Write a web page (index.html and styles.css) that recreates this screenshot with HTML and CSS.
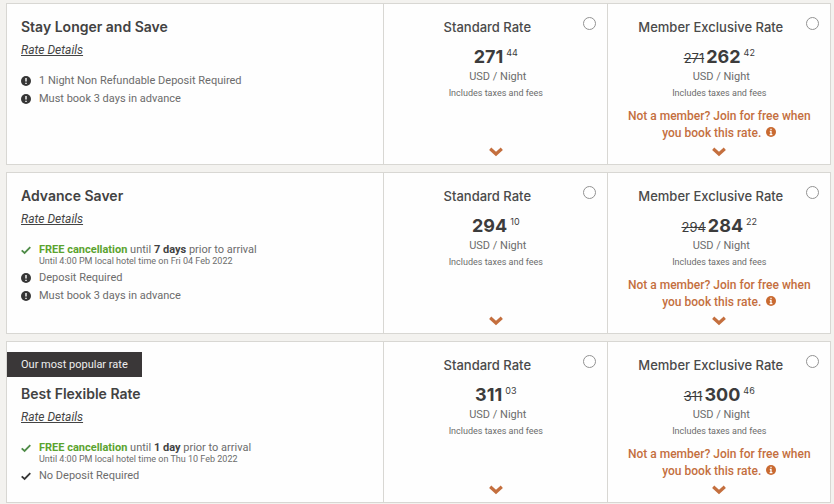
FILE: index.html
```html
<!DOCTYPE html>
<html lang="en">
<head>
<meta charset="utf-8">
<title>Room rates</title>
<link rel="stylesheet" href="styles.css">
</head>
<body>
<svg class="sprite" aria-hidden="true">
  <symbol id="alert" viewBox="0 0 10 10"><circle cx="5" cy="5" r="5" fill="#363636"/><path d="M5 2v3.6M5 6.7v1.3" stroke="#fff" stroke-width="1.4"/></symbol>
  <symbol id="check" viewBox="0 0 10 10"><path d="M.7 5.3 3.6 8 9.3 2.2" fill="none" stroke="currentColor" stroke-width="1.8"/></symbol>
  <symbol id="info" viewBox="0 0 10 10"><circle cx="5" cy="5" r="5" fill="#c96a31"/><path d="M5 1.7v1.4M3.8 4.5H5v3M3.6 7.7h2.8" fill="none" stroke="#fff" stroke-width="1.3"/></symbol>
  <symbol id="chevron" viewBox="0 0 14 10"><path d="M1.2 1.8 7 7 12.8 1.8" fill="none" stroke="currentColor" stroke-width="3.2"/></symbol>
</svg>
<main class="rates">
  <article class="card">
    <section class="summary">
      <h2 class="name">Stay Longer and Save</h2>
      <a class="details" href="#">Rate Details</a>
      <ul class="terms">
        <li><svg class="icon"><use href="#alert"/></svg><span>1 Night Non Refundable Deposit Required</span></li>
        <li><svg class="icon"><use href="#alert"/></svg><span>Must book 3 days in advance</span></li>
      </ul>
    </section>
    <section class="rate">
      <div class="rate-head"><label for="s1">Standard Rate</label><input type="radio" name="rate" id="s1"></div>
      <p class="price"><strong>271</strong><sup>44</sup></p>
      <p class="unit">USD / Night</p>
      <p class="tax">Includes taxes and fees</p>
      <button class="expand" type="button" aria-label="Show more"><svg><use href="#chevron"/></svg></button>
    </section>
    <section class="rate">
      <div class="rate-head"><label for="m1">Member Exclusive Rate</label><input type="radio" name="rate" id="m1"></div>
      <p class="price"><s>271</s><strong>262</strong><sup>42</sup></p>
      <p class="unit">USD / Night</p>
      <p class="tax">Includes taxes and fees</p>
      <p class="join">Not a member? Join for free when you book this rate. <svg class="info"><use href="#info"/></svg></p>
      <button class="expand" type="button" aria-label="Show more"><svg><use href="#chevron"/></svg></button>
    </section>
  </article>

  <article class="card">
    <section class="summary">
      <h2 class="name">Advance Saver</h2>
      <a class="details" href="#">Rate Details</a>
      <ul class="terms">
        <li><svg class="icon green"><use href="#check"/></svg><span><b class="free">FREE cancellation</b> until <b>7 days</b> prior to arrival<small>Until 4:00 PM local hotel time on Fri 04 Feb 2022</small></span></li>
        <li><svg class="icon"><use href="#alert"/></svg><span>Deposit Required</span></li>
        <li><svg class="icon"><use href="#alert"/></svg><span>Must book 3 days in advance</span></li>
      </ul>
    </section>
    <section class="rate">
      <div class="rate-head"><label for="s2">Standard Rate</label><input type="radio" name="rate" id="s2"></div>
      <p class="price"><strong>294</strong><sup>10</sup></p>
      <p class="unit">USD / Night</p>
      <p class="tax">Includes taxes and fees</p>
      <button class="expand" type="button" aria-label="Show more"><svg><use href="#chevron"/></svg></button>
    </section>
    <section class="rate">
      <div class="rate-head"><label for="m2">Member Exclusive Rate</label><input type="radio" name="rate" id="m2"></div>
      <p class="price"><s>294</s><strong>284</strong><sup>22</sup></p>
      <p class="unit">USD / Night</p>
      <p class="tax">Includes taxes and fees</p>
      <p class="join">Not a member? Join for free when you book this rate. <svg class="info"><use href="#info"/></svg></p>
      <button class="expand" type="button" aria-label="Show more"><svg><use href="#chevron"/></svg></button>
    </section>
  </article>

  <article class="card">
    <section class="summary popular">
      <p class="badge">Our most popular rate</p>
      <h2 class="name">Best Flexible Rate</h2>
      <a class="details" href="#">Rate Details</a>
      <ul class="terms">
        <li><svg class="icon green"><use href="#check"/></svg><span><b class="free">FREE cancellation</b> until <b>1 day</b> prior to arrival<small>Until 4:00 PM local hotel time on Thu 10 Feb 2022</small></span></li>
        <li><svg class="icon"><use href="#check"/></svg><span>No Deposit Required</span></li>
      </ul>
    </section>
    <section class="rate">
      <div class="rate-head"><label for="s3">Standard Rate</label><input type="radio" name="rate" id="s3"></div>
      <p class="price"><strong>311</strong><sup>03</sup></p>
      <p class="unit">USD / Night</p>
      <p class="tax">Includes taxes and fees</p>
      <button class="expand" type="button" aria-label="Show more"><svg><use href="#chevron"/></svg></button>
    </section>
    <section class="rate">
      <div class="rate-head"><label for="m3">Member Exclusive Rate</label><input type="radio" name="rate" id="m3"></div>
      <p class="price"><s>311</s><strong>300</strong><sup>46</sup></p>
      <p class="unit">USD / Night</p>
      <p class="tax">Includes taxes and fees</p>
      <p class="join">Not a member? Join for free when you book this rate. <svg class="info"><use href="#info"/></svg></p>
      <button class="expand" type="button" aria-label="Show more"><svg><use href="#chevron"/></svg></button>
    </section>
  </article>
</main>
</body>
</html>
```
FILE: styles.css
```css
* { box-sizing: border-box; }
body {
  margin: 0;
  background: #f3f2ef;
  color: #6c6c6c;
  font-family: Roboto, "Liberation Sans", sans-serif;
  font-size: 11px;
}
p, h2, ul { margin: 0; padding: 0; }
.sprite { display: none; }

.rates {
  display: flex;
  flex-direction: column;
  gap: 7px;
  padding: 3px 3px 2px 6px;
}
.card {
  display: grid;
  grid-template-columns: 377fr 224fr 224fr;
  background: #fefefe;
  border: 1px solid #d8d7d3;
}

.summary { padding: 13px 14px 0; }
.summary.popular { padding-top: 10px; }
.badge {
  width: fit-content;
  margin: 0 0 7px -14px;
  padding: 0 14px;
  background: #3a3738;
  color: #eee;
  font-size: 11px;
  line-height: 25px;
}
.name {
  color: #424242;
  font-family: Inter, sans-serif;
  font-size: 14px;
  font-weight: 600;
  line-height: 20px;
}
.details {
  display: block;
  width: fit-content;
  margin-top: 5px;
  color: #444;
  font-size: 12px;
  font-style: italic;
  line-height: 16px;
}
.terms { margin-top: 14px; list-style: none; }
.terms li {
  display: flex;
  gap: 8px;
  padding: 3px 0;
  line-height: 12px;
}
.terms b { color: #424242; font-weight: 700; }
.terms .free { color: #5ba32f; }
.terms small { display: block; font-size: 9px; line-height: 10px; }
.icon { flex: none; width: 10px; height: 10px; margin-top: 1px; color: #363636; }
.icon.green { color: #4f8c48; }

.rate {
  display: flex;
  flex-direction: column;
  padding: 13px 11px 3px 8px;
  border-left: 1px solid #d8d7d3;
  text-align: center;
}
.rate-head {
  display: grid;
  grid-template-columns: 1fr auto;
  color: #4a4a4a;
  font-family: Inter, sans-serif;
  font-size: 13px;
  font-weight: 500;
  line-height: 20px;
}
.rate-head input {
  appearance: none;
  width: 13px;
  height: 13px;
  margin: 0;
  border: 1px solid #929292;
  border-radius: 50%;
  background: #fff;
}
.price {
  display: flex;
  justify-content: center;
  align-items: baseline;
  height: 22px;
  margin-top: 9px;
  padding-left: 4px;
  color: #3c3c3c;
  font-family: Inter, sans-serif;
  line-height: 22px;
}
.price strong { font-size: 18px; font-weight: 700; }
.price s { margin-right: 2px; font-size: 13px; }
.price sup {
  align-self: flex-start;
  margin-left: 3px;
  font-size: 9px;
  line-height: 14px;
}
.unit { margin-top: 2px; padding-left: 8px; line-height: 14px; }
.tax { margin-top: 2px; padding-left: 4px; font-size: 9px; line-height: 14px; }
.join {
  margin-top: 8px;
  padding-left: 4px;
  color: #c46f3e;
  font-size: 12px;
  font-weight: 500;
  line-height: 17px;
}
.info { width: 10px; height: 10px; margin-left: 2px; }
.expand {
  display: flex;
  justify-content: center;
  align-items: center;
  width: 100%;
  height: 19px;
  margin-top: auto;
  padding: 0 0 0 4px;
  border: 0;
  background: none;
  color: #c46f3e;
}
.expand svg { width: 14px; height: 10px; }
```
